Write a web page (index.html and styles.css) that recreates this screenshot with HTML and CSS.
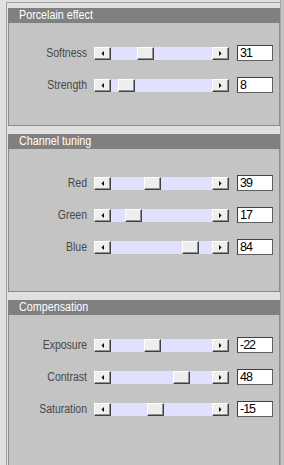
FILE: index.html
```html
<!DOCTYPE html>
<html>

<head>
    <title>Adjustments</title>
    <link rel="stylesheet" href="styles.css">
</head>

<body>
    <div class="frame">
        <div class="group">
            <div class="group-title"><span>Porcelain effect</span></div>
            <div class="group-body first">
                <div class="row">
                    <span class="row-label">Softness</span>
                    <div class="scroll">
                        <button class="arrow"><svg width="3" height="5" viewBox="0 0 3 5"><polygon points="3,0 3,5 0.5,2.5" /></svg></button>
                        <div class="track"><div class="thumb" style="left: 26px"></div></div>
                        <button class="arrow"><svg width="3" height="5" viewBox="0 0 3 5"><polygon points="0,0 0,5 2.5,2.5" /></svg></button>
                    </div>
                    <input class="value" value="31" />
                </div>
                <div class="row">
                    <span class="row-label">Strength</span>
                    <div class="scroll">
                        <button class="arrow"><svg width="3" height="5" viewBox="0 0 3 5"><polygon points="3,0 3,5 0.5,2.5" /></svg></button>
                        <div class="track"><div class="thumb" style="left: 7px"></div></div>
                        <button class="arrow"><svg width="3" height="5" viewBox="0 0 3 5"><polygon points="0,0 0,5 2.5,2.5" /></svg></button>
                    </div>
                    <input class="value" value="8" />
                </div>
            </div>
        </div>

        <div class="group">
            <div class="group-title"><span>Channel tuning</span></div>
            <div class="group-body second">
                <div class="row">
                    <span class="row-label">Red</span>
                    <div class="scroll">
                        <button class="arrow"><svg width="3" height="5" viewBox="0 0 3 5"><polygon points="3,0 3,5 0.5,2.5" /></svg></button>
                        <div class="track"><div class="thumb" style="left: 33px"></div></div>
                        <button class="arrow"><svg width="3" height="5" viewBox="0 0 3 5"><polygon points="0,0 0,5 2.5,2.5" /></svg></button>
                    </div>
                    <input class="value" value="39" />
                </div>
                <div class="row">
                    <span class="row-label">Green</span>
                    <div class="scroll">
                        <button class="arrow"><svg width="3" height="5" viewBox="0 0 3 5"><polygon points="3,0 3,5 0.5,2.5" /></svg></button>
                        <div class="track"><div class="thumb" style="left: 14px"></div></div>
                        <button class="arrow"><svg width="3" height="5" viewBox="0 0 3 5"><polygon points="0,0 0,5 2.5,2.5" /></svg></button>
                    </div>
                    <input class="value" value="17" />
                </div>
                <div class="row">
                    <span class="row-label">Blue</span>
                    <div class="scroll">
                        <button class="arrow"><svg width="3" height="5" viewBox="0 0 3 5"><polygon points="3,0 3,5 0.5,2.5" /></svg></button>
                        <div class="track"><div class="thumb" style="left: 71px"></div></div>
                        <button class="arrow"><svg width="3" height="5" viewBox="0 0 3 5"><polygon points="0,0 0,5 2.5,2.5" /></svg></button>
                    </div>
                    <input class="value" value="84" />
                </div>
            </div>
        </div>

        <div class="group last">
            <div class="group-title"><span>Compensation</span></div>
            <div class="group-body third">
                <div class="row">
                    <span class="row-label">Exposure</span>
                    <div class="scroll">
                        <button class="arrow"><svg width="3" height="5" viewBox="0 0 3 5"><polygon points="3,0 3,5 0.5,2.5" /></svg></button>
                        <div class="track"><div class="thumb" style="left: 33px"></div></div>
                        <button class="arrow"><svg width="3" height="5" viewBox="0 0 3 5"><polygon points="0,0 0,5 2.5,2.5" /></svg></button>
                    </div>
                    <input class="value" value="-22" />
                </div>
                <div class="row">
                    <span class="row-label">Contrast</span>
                    <div class="scroll">
                        <button class="arrow"><svg width="3" height="5" viewBox="0 0 3 5"><polygon points="3,0 3,5 0.5,2.5" /></svg></button>
                        <div class="track"><div class="thumb" style="left: 62px"></div></div>
                        <button class="arrow"><svg width="3" height="5" viewBox="0 0 3 5"><polygon points="0,0 0,5 2.5,2.5" /></svg></button>
                    </div>
                    <input class="value" value="48" />
                </div>
                <div class="row">
                    <span class="row-label">Saturation</span>
                    <div class="scroll">
                        <button class="arrow"><svg width="3" height="5" viewBox="0 0 3 5"><polygon points="3,0 3,5 0.5,2.5" /></svg></button>
                        <div class="track"><div class="thumb" style="left: 36px"></div></div>
                        <button class="arrow"><svg width="3" height="5" viewBox="0 0 3 5"><polygon points="0,0 0,5 2.5,2.5" /></svg></button>
                    </div>
                    <input class="value" value="-15" />
                </div>
            </div>
        </div>
    </div>
    <div class="side-strip"></div>
</body>

</html>
```

FILE: styles.css
```css
body {
    margin: 0;
    height: 465px;
    overflow: hidden;
    display: flex;
    background-color: #e0e0e0;
    font-family: "Liberation Sans", Arial, sans-serif;
    font-size: 12px;
}

.frame {
    flex: 1;
    margin: 2px 0 0 6px;
    padding: 5px 0 0 1px;
    border-top: 1px solid #a0a0a0;
    border-left: 1px solid #a0a0a0;
    display: flex;
    flex-direction: column;
    gap: 8px;
}

.side-strip {
    width: 3px;
    border-left: 1px solid #a4a4a4;
    background-color: #c4c4c4;
}

.group {
    display: flex;
    flex-direction: column;
}

.last {
    flex: 1;
    min-height: 0;
}

.group-title {
    height: 15px;
    line-height: 15px;
    padding-left: 11px;
    background-color: #808080;
    color: #ffffff;
    font-size: 12.5px;
}

/* the original UI font is narrower than Arial */
.group-title span {
    display: inline-block;
    transform: scaleX(0.86);
    transform-origin: left;
}

.group-body {
    background-color: #c4c4c4;
    border: 1px solid #8c8c8c;
    border-top: 0;
    display: flex;
    flex-direction: column;
    gap: 16px;
}

.first {
    padding: 22px 0 32px;
}

.second {
    padding: 26px 0 36px;
}

.third {
    flex: 1;
    padding-top: 22px;
    border-bottom: 0;
}

.row {
    display: flex;
    align-items: center;
    height: 16px;
}

.row-label {
    width: 78px;
    margin-right: 7px;
    text-align: right;
    color: #484848;
    font-size: 12.5px;
    transform: scaleX(0.84);
    transform-origin: right;
}

.scroll {
    display: flex;
    width: 135px;
    height: 13px;
}

.arrow,
.thumb {
    width: 17px;
    height: 13px;
    padding: 0;
    background-color: #eeeeee;
    border: 1px solid;
    border-color: #ffffff #404040 #404040 #ffffff;
    box-shadow: inset -1px -1px 0 #909090;
    box-sizing: border-box;
}

.arrow {
    display: flex;
    align-items: center;
    justify-content: center;
}

.arrow svg {
    fill: #000000;
}

.track {
    flex: 1;
    position: relative;
    background-color: #e0e0ff;
}

.thumb {
    position: absolute;
    top: 0;
}

.value {
    width: 36px;
    height: 16px;
    margin-left: 8px;
    padding: 0 0 0 2px;
    box-sizing: border-box;
    border: 1px solid;
    border-color: #404040 #606060 #606060 #404040;
    background-color: #ffffff;
    color: #000000;
    font-family: "Liberation Sans", Arial, sans-serif;
    font-size: 12.5px;
    letter-spacing: -1px;
    outline: none;
}
```
